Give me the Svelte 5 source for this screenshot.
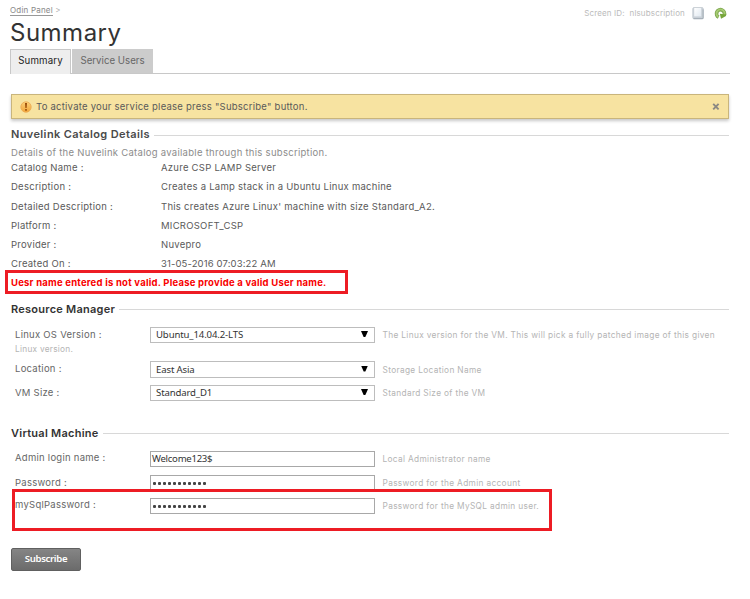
<script>
  const details = [
    ['Catalog Name :', 'Azure CSP LAMP Server'],
    ['Description :', 'Creates a Lamp stack in a Ubuntu Linux machine'],
    ['Detailed Description :', "This creates Azure Linux' machine with size Standard_A2."],
    ['Platform :', 'MICROSOFT_CSP'],
    ['Provider :', 'Nuvepro'],
    ['Created On :', '31-05-2016 07:03:22 AM']
  ];
  const selects = [
    { label: 'Linux OS Version :', value: 'Ubuntu_14.04.2-LTS', hint: 'The Linux version for the VM. This will pick a fully patched image of this given', more: 'Linux version.' },
    { label: 'Location :', value: 'East Asia', hint: 'Storage Location Name' },
    { label: 'VM Size :', value: 'Standard_D1', hint: 'Standard Size of the VM' }
  ];
  const inputs = [
    { label: 'Admin login name :', value: 'Welcome123$', hint: 'Local Administrator name' },
    { label: 'Password :', dots: 11, hint: 'Password for the Admin account' },
    { label: 'mySqlPassword :', dots: 11, hint: 'Password for the MySQL admin user.' }
  ];
</script>

<div class="page">
  <header class="top">
    <div class="crumb"><span class="link">Odin Panel</span> <span class="gt">&gt;</span></div>
    <div class="screen">
      <span>Screen ID:&nbsp; nlsubscription</span>
      <svg class="doc" width="12" height="13" viewBox="0 0 12 13">
        <defs><linearGradient id="paper" x1="0" y1="0" x2="1" y2="1"><stop offset="0" stop-color="#fff" /><stop offset="1" stop-color="#e0e8f0" /></linearGradient></defs>
        <rect x=".8" y=".6" width="10.4" height="11.2" rx="1.2" fill="#c9d0d7" stroke="#c9d0d6" />
        <path d="M2.2 1h7v8.4h-7z" fill="url(#paper)" />
        <path d="M1.5 11.6h9.6V2.4" fill="none" stroke="#a3adb6" />
      </svg>
      <svg class="reload" width="13" height="13" viewBox="0 0 13 13">
        <path d="M4.6 10.2A4 4 0 1 1 10.2 8.2" fill="none" stroke="#7ba44c" stroke-width="3.6" />
        <path d="M4.4 9.8A4 4 0 1 1 10.2 8" fill="none" stroke="#a5cb72" stroke-width="2" />
        <path d="M5.8 6.8l6.6.6-.8 1.8-4.6 2.6z" fill="#76a53a" />
      </svg>
    </div>
  </header>
  <h1>Summary</h1>
  <nav class="tabs"><span class="tab on">Summary</span><span class="tab">Service Users</span></nav>

  <div class="banner">
    <svg width="12" height="12" viewBox="0 0 12 12">
      <defs><linearGradient id="warn" x1="0" y1="0" x2="0" y2="1"><stop offset="0" stop-color="#fbd07a" /><stop offset="1" stop-color="#f2a63a" /></linearGradient></defs>
      <circle cx="6" cy="6" r="5.2" fill="url(#warn)" stroke="#eba850" stroke-width=".8" />
      <path d="M5 2h2l-.4 5H5.4zM5.2 8h1.6v1.7H5.2z" fill="#9a4c08" />
    </svg>
    <span class="msg">To activate your service please press "Subscribe" button.</span>
    <svg class="close" width="8" height="8" viewBox="0 0 8 8"><path d="M1.2 .9l5.4 5.4M6.6 .9L1.2 6.3" stroke="#8b8983" stroke-width="1.9" /></svg>
  </div>

  <h2 class="soft">Nuvelink Catalog Details</h2>
  <p class="intro">Details of the Nuvelink Catalog available through this subscription.</p>
  <dl>
    {#each details as [name, value]}
      <div class="detail"><dt>{name}</dt><dd>{value}</dd></div>
    {/each}
  </dl>
  <p class="error">Uesr name entered is not valid. Please provide a valid User name.</p>

  <h2 class="resource">Resource Manager</h2>
  <div class="form">
    {#each selects as s}
      <div class="row" class:tall={s.more}>
        <div class="label">{s.label}{#if s.more}<small>{s.more}</small>{/if}</div>
        <div class="field select"><span>{s.value}</span><i></i></div>
        <div class="hint">{s.hint}</div>
      </div>
    {/each}
  </div>

  <h2 class="vm">Virtual Machine</h2>
  <div class="form second">
    {#each inputs as f}
      <div class="row">
        <div class="label">{f.label}</div>
        <div class="field">
          {#if f.dots}<span class="dots">{#each Array(f.dots) as _}<b></b>{/each}</span>{:else}<span>{f.value}</span>{/if}
        </div>
        <div class="hint">{f.hint}</div>
      </div>
    {/each}
    <div class="mark"></div>
  </div>
  <button>Subscribe</button>
</div>

<style>
  :global(body) { background: #fff; }
  .page {
    width: 750px; height: 599px; box-sizing: border-box; padding: 4px 20px 0 10px; overflow: hidden;
    font: 9.5px/12px Inter, "Open Sans", sans-serif; letter-spacing: .26px; color: #5a5a5a; white-space: nowrap;
  }
  .top { display: flex; justify-content: space-between; height: 17px; font-size: 8px; }
  .crumb { color: #888; letter-spacing: .2px; }
  .link { border-bottom: 1px solid #999; }
  .gt { color: #aaa; }
  .screen { display: flex; align-items: flex-start; color: #bbb; padding: 3px 3px 0 0; letter-spacing: .15px; }
  .doc { margin-left: 7px; }
  .reload { margin-left: 10px; }
  h1 { margin: 0; height: 28px; font: 400 24px/23px Inter, sans-serif; letter-spacing: .5px; color: #333; }
  .tabs { display: flex; gap: 1px; height: 24px; border-bottom: 1px solid #c8c8c8; letter-spacing: 0; }
  .tab { box-sizing: border-box; width: 81px; height: 24px; background: #ccc; color: #666; text-align: center; line-height: 24px; font-size: 9.7px; }
  .tab.on { width: 61px; height: 25px; background: #eee; color: #222; border: 1px solid #c8c8c8; border-bottom: 0; line-height: 22px; letter-spacing: .15px; }
  .banner {
    display: flex; align-items: center; box-sizing: border-box; height: 25px; margin: 20px 1px 0 1px; padding: 0 8px;
    background: #f7e3a1; border: 1px solid #c9b57c; box-shadow: 0 2px 3px rgba(0,0,0,.22);
  }
  .msg { margin-left: 4px; letter-spacing: .24px; }
  .close { margin-left: auto; }
  h2 { display: flex; align-items: center; height: 14px; margin: 0 1px; font: 600 11px/14px Inter, sans-serif; letter-spacing: .25px; color: #333; }
  h2::after { content: ""; flex: 1; height: 1px; margin: 2px 0 0 4px; background: #d8d8d8; }
  .soft { margin-top: 8px; color: #4a4a4a; letter-spacing: .38px; }
  p { margin: 0; }
  .intro { margin: 6px 0 0 1px; color: #8c8c8c; letter-spacing: .28px; }
  dl { margin: 3px 0 0 1px; }
  .detail { display: flex; height: 19.25px; }
  dt { width: 150px; }
  dd { margin: 0; }
  .detail:last-child dd { letter-spacing: .13px; }
  .error {
    box-sizing: border-box; width: 343px; height: 24px; margin: -8px 0 0 -5px; padding-left: 3px;
    border: 3px solid #ed1c24; color: #f80000; font-weight: 700; line-height: 19px; letter-spacing: .22px;
  }
  .resource { margin-top: 8px; }
  .form { padding: 11px 0 0 5px; }
  .row { display: flex; height: 24px; }
  .row.tall { height: 34px; }
  .row:nth-child(3) { height: 23px; }
  .label { width: 135px; line-height: 16px; color: #666; }
  small { display: block; font-size: 8.3px; line-height: 12px; color: #b4b4b4; }
  .field {
    display: flex; align-items: center; box-sizing: border-box; width: 225px; height: 16px; padding: 1px 0 0 1px;
    border: 1px solid #a8a8a8; background: #fff; color: #333; font: 9.6px/14px "Noto Sans", sans-serif; letter-spacing: -.28px;
  }
  .select { padding: 1px 6px 0 5px; justify-content: space-between; border-color: #bdbdbd; letter-spacing: -.14px; }
  .row:nth-child(2) .select { height: 17px; }
  i { width: 7px; height: 6px; margin-top: -2px; background: #000; clip-path: polygon(0 0, 100% 0, 62% 100%, 38% 100%); }
  .hint { margin-left: 7.5px; font-size: 8.3px; line-height: 17px; color: #b4b4b4; letter-spacing: .34px; }
  .row:nth-child(2) .hint { line-height: 18px; }
  .vm { margin-top: 18px; }
  .second { position: relative; }
  .second .label { line-height: 14px; }
  .second .row:nth-child(2) { height: 23px; }
  .second .row:nth-child(2) .label { line-height: 15px; }
  .second .row:nth-child(2) .hint { line-height: 16px; }
  .dots { display: flex; gap: 2px; padding: 1px 0 0 1px; }
  b { width: 3px; height: 3px; border-radius: 1px; background: #444; }
  .mark { position: absolute; left: 2px; top: 49px; width: 540px; height: 42px; box-sizing: border-box; border: 3px solid #ed1c24; }
  button {
    display: block; width: 70px; height: 23px; margin: 27px 0 0 1px; padding: 0; border: 1px solid #606060; border-radius: 2px;
    background: linear-gradient(#858585, #6b6b6b); color: #fff; font: 600 9.6px/20px "Noto Sans", sans-serif; letter-spacing: -.35px;
  }
</style>
